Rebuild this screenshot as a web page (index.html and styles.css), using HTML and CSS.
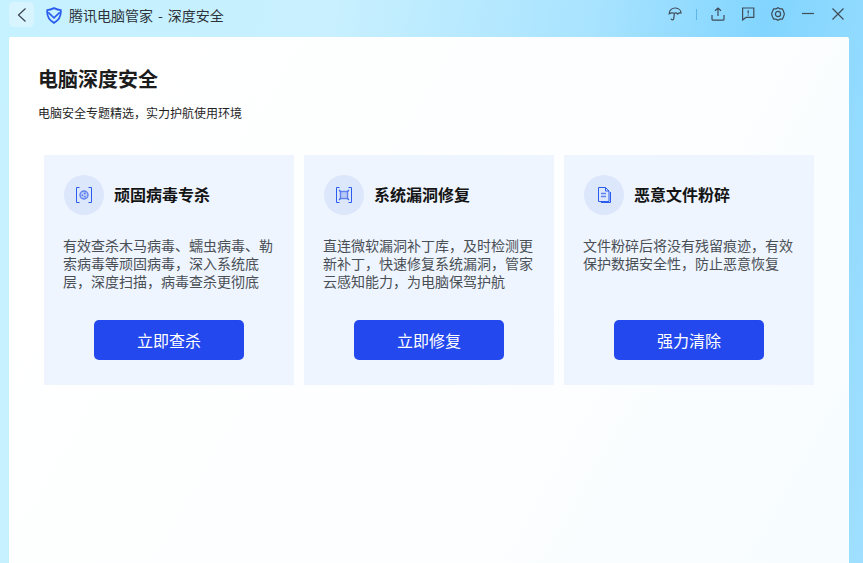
FILE: index.html
```html
<!DOCTYPE html>
<html lang="zh-CN">
<head>
    <meta charset="UTF-8">
    <title>腾讯电脑管家 - 深度安全</title>
    <link rel="stylesheet" href="styles.css">
</head>
<body>
    <div class="window">
        <header class="titlebar">
            <div class="title-left">
                <button class="back-btn">
                    <svg width="12" height="16" viewBox="0 0 12 16"><path d="M9.5 1.5 L2.5 8 L9.5 14.5" fill="none" stroke="#3a4450" stroke-width="1.2"/></svg>
                </button>
                <svg class="logo" width="16" height="17" viewBox="0 0 18 19">
                    <path d="M1.4 3.4 C4 3.2 6.4 2.4 9 1.2 C11.6 2.4 14 3.2 16.6 3.4 C17.2 9.5 14.5 14.8 9 17.8 C3.5 14.8 .8 9.5 1.4 3.4 Z" fill="none" stroke="#2a5cf0" stroke-width="2"/>
                    <path d="M2.5 6 L9 12.2 L15.5 6" fill="none" stroke="#2a5cf0" stroke-width="1.8"/>
                </svg>
                <span class="app-title">腾讯电脑管家<span class="dash">-</span>深度安全</span>
            </div>
            <div class="title-right">
                <svg width="14" height="14" viewBox="0 0 14 14" fill="none" stroke="#3f4c5a" stroke-width="1.2"><path d="M1.2 6.8 C1 3 4.4 .8 7.6 1 C10.6 1.2 13 3.4 13 6 C11.6 5.6 10.6 6 9.6 7 C8.6 6 7.2 5.8 6 6.2 C4.6 5.6 2.6 5.8 1.2 6.8 Z"/><path d="M6.4 6.4 L5.8 11.4 C5.6 13.4 3.4 13.4 3 11.6"/></svg>
                <i class="sep"></i>
                <svg width="14" height="14" viewBox="0 0 14 14" fill="none" stroke="#3f4c5a" stroke-width="1.2"><path d="M7 9 L7 1 M4 3.8 L7 1 L10 3.8"/><path d="M1 8 L1 12.2 Q1 13.2 2 13.2 L12 13.2 Q13 13.2 13 12.2 L13 8"/></svg>
                <svg width="14" height="14" viewBox="0 0 14 14" fill="none" stroke="#3f4c5a" stroke-width="1.2"><path d="M1.6 1 L12.8 1 L12.8 10.4 L5 10.4 L1.6 13 Z"/><path d="M7.2 3.2 L7.2 6.4 M7.2 7.4 L7.2 8.6"/></svg>
                <svg width="14" height="14" viewBox="0 0 14 14" fill="none" stroke="#3f4c5a" stroke-width="1.2"><path d="M7 .8 L9 1.9 L11.3 1.9 L12.4 4 L13.4 7 L12.4 10 L11.3 12.1 L9 12.1 L7 13.2 L5 12.1 L2.7 12.1 L1.6 10 L.6 7 L1.6 4 L2.7 1.9 L5 1.9 Z"/><circle cx="7" cy="7" r="2.6"/></svg>
                <svg width="14" height="14" viewBox="0 0 14 14" fill="none" stroke="#3f4c5a" stroke-width="1.2"><path d="M1 6.5 L13 6.5"/></svg>
                <svg width="14" height="14" viewBox="0 0 14 14" fill="none" stroke="#3f4c5a" stroke-width="1.2"><path d="M1.5 1.5 L12.5 12.5 M12.5 1.5 L1.5 12.5"/></svg>
            </div>
        </header>

        <main class="content">
            <h1>电脑深度安全</h1>
            <p class="subtitle">电脑安全专题精选，实力护航使用环境</p>

            <div class="cards">
                <section class="card">
                    <div class="card-head">
                        <span class="card-icon">
                            <svg width="16" height="16" viewBox="0 0 16 16" fill="none" stroke="#2a5cf0">
                                <path d="M3.5 .5 L.5 .5 L.5 15.5 L3.5 15.5 M12.5 .5 L15.5 .5 L15.5 15.5 L12.5 15.5"/>
                                <circle cx="8" cy="8" r="4" fill="#b9c9f6" stroke="#5f82ee" stroke-width="1.4"/>
                                <circle cx="8.8" cy="6.4" r=".8" fill="#3c68ec" stroke="none"/>
                                <circle cx="6.4" cy="8.2" r=".8" fill="#3c68ec" stroke="none"/>
                                <circle cx="9" cy="9.8" r=".8" fill="#3c68ec" stroke="none"/>
                            </svg>
                        </span>
                        <h2>顽固病毒专杀</h2>
                    </div>
                    <p class="card-text">有效查杀木马病毒、蠕虫病毒、勒索病毒等顽固病毒，深入系统底层，深度扫描，病毒查杀更彻底</p>
                    <button class="action-btn">立即查杀</button>
                </section>

                <section class="card">
                    <div class="card-head">
                        <span class="card-icon">
                            <svg width="16" height="16" viewBox="0 0 16 16" fill="none" stroke="#2a5cf0">
                                <path d="M3.5 .5 L.5 .5 L.5 15.5 L3.5 15.5 M12.5 .5 L15.5 .5 L15.5 15.5 L12.5 15.5"/>
                                <rect x="4.5" y="4.5" width="7" height="7" fill="#b9c9f6" stroke="#5f82ee" stroke-width="1.4"/>
                                <path d="M3 3 L4.5 4.5 M13 3 L11.5 4.5 M3 13 L4.5 11.5 M13 13 L11.5 11.5" stroke="#3c68ec" stroke-width="1.3"/>
                            </svg>
                        </span>
                        <h2>系统漏洞修复</h2>
                    </div>
                    <p class="card-text">直连微软漏洞补丁库，及时检测更新补丁，快速修复系统漏洞，管家云感知能力，为电脑保驾护航</p>
                    <button class="action-btn">立即修复</button>
                </section>

                <section class="card">
                    <div class="card-head">
                        <span class="card-icon">
                            <svg width="13" height="16" viewBox="0 0 13 16" fill="none" stroke="#2a5cf0">
                                <path d="M.5 .5 L7.5 .5 L11 4 L11 14.5 L.5 14.5 Z"/>
                                <path d="M7.5 .5 L7.5 4 L11 4 M12.5 5 L12.5 15.5 L3 15.5"/>
                                <path d="M3 6.5 L8 6.5 M3 9.5 L8 9.5" stroke="#5f82ee" stroke-width="1.3"/>
                            </svg>
                        </span>
                        <h2>恶意文件粉碎</h2>
                    </div>
                    <p class="card-text">文件粉碎后将没有残留痕迹，有效保护数据安全性，防止恶意恢复</p>
                    <button class="action-btn">强力清除</button>
                </section>
            </div>
        </main>
    </div>
</body>
</html>
```

FILE: styles.css
```css
* {
    margin: 0;
    padding: 0;
    box-sizing: border-box;
    font-family: "Noto Sans CJK SC", "Noto Sans", sans-serif;
}

html, body {
    height: 100%;
    overflow: hidden;
}

.window {
    height: 563px;
    display: flex;
    flex-direction: column;
    padding: 0 14px 0 9px;
    background: linear-gradient(100deg, #c6f1ff 0%, #c8f0ff 35%, #a8e3ff 62%, #82d5ff 80%, #a0dfff 100%);
}

/* barre de titre */
.titlebar {
    height: 37px;
    flex: none;
    display: flex;
    align-items: center;
    justify-content: space-between;
    padding-bottom: 9px;
}

.title-left {
    display: flex;
    align-items: center;
}

.back-btn {
    width: 25px;
    height: 25px;
    margin-top: 1px;
    border: none;
    border-radius: 5px;
    background: #d8f5ff;
    display: flex;
    align-items: center;
    justify-content: center;
}

.logo {
    margin: 3px 1px 0 12px;
}

.app-title {
    margin: 2px 0 0 6px;
    font-size: 14px;
    color: #2c333b;
}

.dash {
    margin: 0 5px;
    font-family: inherit;
}

.title-right {
    display: flex;
    align-items: center;
    gap: 16px;
    margin-right: 4px;
}

.sep {
    width: 1px;
    height: 11px;
    margin: 0 -2px;
    background: #5fb6e4;
}

/* contenu */
.content {
    flex: 1;
    padding: 28px 30px 0 29px;
    border-radius: 2px 2px 0 0;
    background: linear-gradient(120deg, #ffffff 0%, #fdfeff 60%, #f6fcff 100%);
}

h1 {
    font-size: 20px;
    line-height: 28px;
    font-weight: 700;
    color: #1c1c1c;
}

.subtitle {
    margin-top: 11px;
    font-size: 12px;
    line-height: 18px;
    color: #1f1f1f;
}

.cards {
    display: flex;
    gap: 10px;
    margin: 33px 0 0 6px;
}

.card {
    width: 250px;
    height: 230px;
    padding: 20px 20px 0 19px;
    background: #eef5ff;
    display: flex;
    flex-direction: column;
}

.card-head {
    display: flex;
    align-items: center;
    gap: 10px;
    padding-left: 1px;
}

.card-icon {
    width: 40px;
    height: 40px;
    border-radius: 50%;
    background: #dce7fc;
    display: flex;
    align-items: center;
    justify-content: center;
}

h2 {
    margin-bottom: 2px;
    font-size: 16px;
    font-weight: 700;
    color: #141414;
}

.card-text {
    height: 54px;
    margin-top: 21px;
    font-size: 14px;
    line-height: 18px;
    color: #4a4f55;
    overflow: hidden;
}

.action-btn {
    width: 150px;
    height: 40px;
    margin: 30px 0 0 31px;
    border: none;
    border-radius: 5px;
    background: #2348ee;
    color: #fff;
    font-size: 16px;
}
```
